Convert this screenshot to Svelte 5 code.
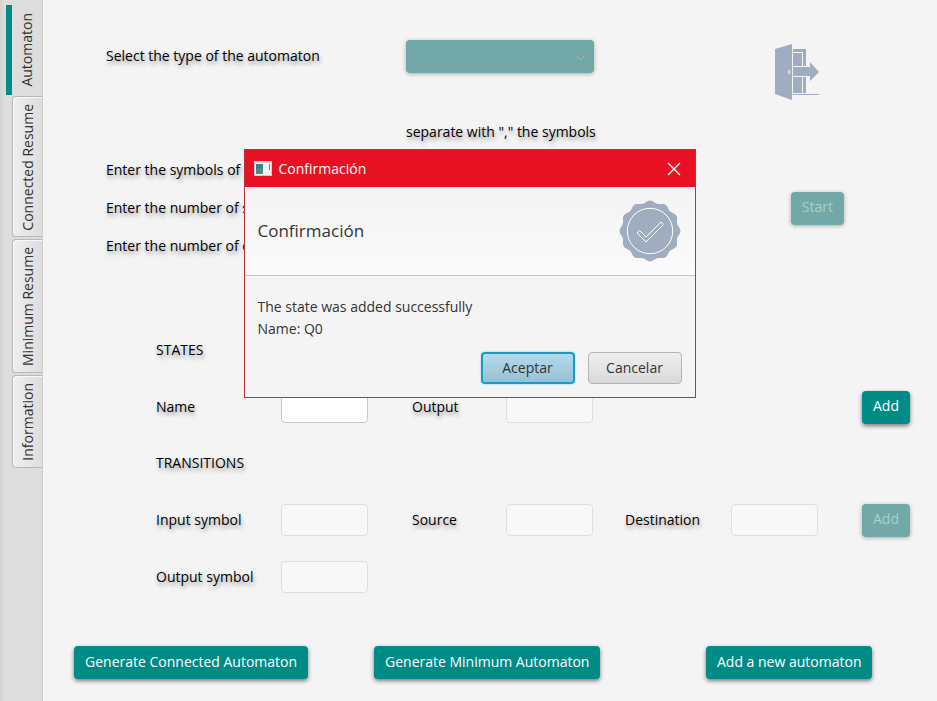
<script>
  const tabs = ['Automaton', 'Connected Resume', 'Minimum Resume', 'Information'];
  let current = $state('Automaton');
  let open = $state(true);

  // Outline of the seal: a circle with twelve soft lobes
  const seal =
    Array.from({ length: 120 }, (_, i) => {
      const a = (i / 120) * Math.PI * 2;
      const r = 29.3 + 1.2 * Math.cos(12 * a);
      return `${i ? 'L' : 'M'}${(31 + r * Math.sin(a)).toFixed(2)} ${(31 - r * Math.cos(a)).toFixed(2)}`;
    }).join('') + 'Z';
</script>

<div class="app">
  <div class="tabs" role="tablist" aria-orientation="vertical">
    {#each tabs as tab}
      <button class="tab" class:selected={tab === current} role="tab" aria-selected={tab === current} onclick={() => (current = tab)}>
        <span>{tab}</span>
      </button>
    {/each}
  </div>

  <main>
    <section class="kind">
      <label for="kind">Select the type of the automaton</label>
      <div class="combo">
        <select id="kind" disabled></select>
        <svg width="9" height="8" viewBox="0 0 9 8">
          <path d="M1 2.500 4.500 6.500 8 2.500" fill="none" stroke="#a9c6c6" stroke-width="1" />
          <path d="M0.500 1 4.500 6 8.500 1 4.500 2.500Z" fill="#8d9296" />
        </svg>
      </div>
      <button class="exit" aria-label="Exit">
        <svg width="46" height="58" viewBox="0 0 46 58" fill="#a0adc0">
          <path fill-rule="evenodd" d="M0 6 17 1V57L0 51ZM13.5 27V31H14.8V27Z" />
          <path d="M18 6H31V23H28V9H18Z" />
          <path d="M18 10H27V23H18Z" />
          <path d="M18 24H35V19L44 29 35 38V33H18Z" />
          <path d="M18 34H27V50H18Z" />
          <path d="M28 34H31V50H28Z" />
          <path d="M18 51H44V52H18Z" />
        </svg>
      </button>
    </section>

    <p class="hint">separate with "," the symbols</p>

    <section class="setup">
      <label for="symbols">Enter the symbols of input</label>
      <input id="symbols" disabled />
      <label for="states">Enter the number of states</label>
      <input id="states" disabled />
      <button class="action" disabled>Start</button>
      <label for="outputs">Enter the number of outputs</label>
      <input id="outputs" disabled />
    </section>

    <h2 class="first">STATES</h2>
    <section class="fields">
      <label for="name">Name</label>
      <input id="name" />
      <label for="output">Output</label>
      <input id="output" disabled />
      <button class="action last">Add</button>
    </section>

    <h2>TRANSITIONS</h2>
    <section class="fields">
      <label for="in">Input symbol</label>
      <input id="in" disabled />
      <label for="source">Source</label>
      <input id="source" disabled />
      <label for="dest">Destination</label>
      <input id="dest" disabled />
      <button class="action last" disabled>Add</button>
      <label class="next" for="out">Output symbol</label>
      <input id="out" disabled />
    </section>

    <footer>
      <button class="action">Generate Connected Automaton</button>
      <button class="action">Generate Minimum Automaton</button>
      <button class="action">Add a new automaton</button>
    </footer>
  </main>

  {#if open}
    <div class="dialog" role="dialog" aria-labelledby="title">
      <header>
        <svg width="18" height="15" viewBox="0 0 18 15">
          <path d="M0 0H18V15H0Z" fill="#c9cfd0" />
          <path d="M1 2H17V14H1Z" fill="#f4f6f6" />
          <path d="M2 3H9V13H2Z" fill="#4a8f86" />
          <path d="M2 3H9V6L2 9Z" fill="#47788c" />
          <path d="M15 3H16V9H15Z" fill="#4a8f86" />
        </svg>
        <span id="title">Confirmación</span>
        <button class="close" aria-label="Cerrar" onclick={() => (open = false)}>
          <svg width="14" height="14" viewBox="0 0 14 14"><path d="M1 1 13 13M13 1 1 13" stroke="#fff" stroke-width="1.3" /></svg>
        </button>
      </header>
      <div class="banner">
        <span>Confirmación</span>
        <svg width="62" height="62" viewBox="0 0 62 62">
          <path d={seal} fill="#a0adc0" />
          <circle cx="31" cy="31" r="22.7" fill="none" stroke="#fff" />
          <path d="M18 33 20.5 30.5 27 37 42 22 44.500 24.500 27 42Z" fill="none" stroke="#fff" />
        </svg>
      </div>
      <p>The state was added successfully<br />Name: Q0</p>
      <div class="choices">
        <button class="ok" onclick={() => (open = false)}>Aceptar</button>
        <button onclick={() => (open = false)}>Cancelar</button>
      </div>
    </div>
  {/if}
</div>

<style>
  :global(body) {
    margin: 0;
  }
  .app {
    position: relative;
    display: flex;
    min-height: 100vh;
    background: #f4f4f4;
    color: #000;
    font: 14px/20px 'Open Sans', 'Noto Sans', sans-serif;
  }
  button,
  input,
  select {
    box-sizing: border-box;
    margin: 0;
    font: inherit;
  }
  p,
  h2 {
    margin: 0;
    font-size: 14px;
    font-weight: 400;
  }

  .tabs {
    box-sizing: border-box;
    display: flex;
    flex-direction: column;
    align-items: flex-end;
    gap: 2px;
    width: 43px;
    padding-top: 5px;
    border-right: 1px solid #d0d0d0;
    background: linear-gradient(to right, #d2d2d2, #dddddd 5px);
  }
  .tab {
    display: flex;
    align-items: center;
    justify-content: center;
    width: 30px;
    padding: 7px 0 6px;
    border: 1px solid #b8b8b8;
    border-right: 0;
    border-radius: 4px 0 0 4px;
    background: linear-gradient(to right, #efefef, #dddddd);
    box-shadow: inset 1px 1px #f8f8f8;
    color: #333;
  }
  .tab span {
    writing-mode: vertical-rl;
    transform: rotate(180deg);
  }
  .tab.selected {
    width: 36px;
    margin-bottom: -1px;
    padding: 8px 0;
    border: 0;
    border-left: 6px solid #008b87;
    border-radius: 0;
    background: none;
    box-shadow: none;
  }

  main {
    flex: 1;
    padding: 40px 0 22px;
  }
  label,
  .hint,
  h2 {
    text-shadow: 1px 3px 4px rgba(0, 0, 0, 0.4);
  }

  .kind,
  .setup {
    display: grid;
    grid-template-columns: 300px 1fr 69px;
    padding: 0 93px 0 63px;
  }
  .kind label {
    line-height: 32px;
  }
  .combo {
    position: relative;
    width: 188px;
    height: 33px;
  }
  .combo svg {
    position: absolute;
    top: 13px;
    right: 9px;
  }
  .combo select {
    appearance: none;
    width: 100%;
    height: 33px;
    border: 0;
    border-radius: 4px;
    background: #72a9a8;
    box-shadow: 0 1px 4px rgba(0, 0, 0, 0.3);
    opacity: 1;
  }
  .exit {
    justify-self: start;
    display: flex;
    margin-top: 3px;
    padding: 0;
    border: 0;
    background: none;
  }
  .hint {
    margin: 21px 0 12px 363px;
  }
  .setup {
    grid-auto-rows: 32px;
    row-gap: 6px;
    align-items: center;
  }
  .setup label,
  .fields label:first-child,
  .fields .next {
    grid-column: 1;
  }
  .setup .action {
    justify-self: end;
  }

  input {
    width: 87px;
    height: 32px;
    border: 1px solid #c8c8c8;
    border-radius: 4px;
    background: #fff;
  }
  input:disabled {
    border-color: #dfdfdf;
    background: #f8f8f8;
  }
  .action {
    height: 33px;
    padding: 0 11px 2px;
    border: 0;
    border-radius: 4px;
    background: #008b87;
    box-shadow: 0 2px 4px rgba(0, 0, 0, 0.5);
    color: #fff;
    white-space: nowrap;
  }
  .action:disabled {
    background: #72a9a8;
    box-shadow: 0 1px 4px rgba(0, 0, 0, 0.3);
    color: #a5cfcd;
  }

  h2 {
    margin: 30px 0 31px 113px;
  }
  h2.first {
    margin-top: 78px;
  }
  .fields {
    display: grid;
    grid-template-columns: 125fr 131fr 94fr 119fr 106fr 131fr 48fr;
    grid-auto-rows: 32px;
    row-gap: 25px;
    align-items: center;
    padding: 0 27px 0 113px;
  }
  .fields .last {
    grid-column: 7;
    width: 100%;
  }

  footer {
    display: grid;
    grid-template-columns: 300fr 332fr 168px;
    justify-items: start;
    margin-top: 53px;
    padding: 0 63px 0 31px;
  }

  .dialog {
    position: absolute;
    top: 149px;
    left: calc(50% - 225px);
    box-sizing: border-box;
    width: 452px;
    border: 1px solid #b8323f;
    background: #f4f4f4;
    color: #333;
  }
  .dialog header {
    display: flex;
    align-items: center;
    gap: 7px;
    height: 37px;
    padding: 0 14px 0 9px;
    background: #e81123;
    color: #fff;
  }
  .close {
    display: flex;
    margin-left: auto;
    padding: 0;
    border: 0;
    background: none;
  }
  .banner {
    display: flex;
    align-items: center;
    justify-content: space-between;
    height: 88px;
    padding: 0 14px 0 13px;
    border-bottom: 1px solid #c4c4c4;
    background: linear-gradient(#f3f3f3, #fbfbfb);
    font-size: 17px;
  }
  .dialog p {
    padding: 20px 13px 0;
    line-height: 22px;
  }
  .choices {
    display: flex;
    justify-content: flex-end;
    gap: 13px;
    padding: 12px 13px 13px;
  }
  .choices button {
    width: 94px;
    height: 32px;
    padding: 0;
    border: 1px solid #b5b5b5;
    border-radius: 4px;
    background: linear-gradient(#efefef, #d9d9d9);
    color: #333;
  }
  .choices .ok {
    border: 2px solid #1c9ac2;
    background: linear-gradient(#b3dbec, #97c0d4);
    box-shadow: 0 0 2px #5cc4e8;
  }
</style>
